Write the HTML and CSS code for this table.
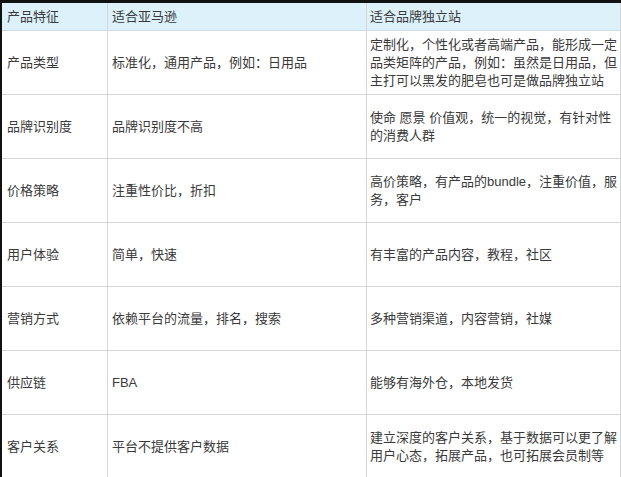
FILE: index.html
```html
<!DOCTYPE html>
<html lang="zh">
<head>
<meta charset="utf-8">
<link rel="stylesheet" href="styles.css">
</head>
<body>
<div class="frame">
  <div class="grid">
    <div class="cell head c1">产品特征</div>
    <div class="cell head c2">适合亚马逊</div>
    <div class="cell head c3">适合品牌独立站</div>

    <div class="cell c1">产品类型</div>
    <div class="cell c2">标准化，通用产品，例如：日用品</div>
    <div class="cell c3">定制化，个性化或者高端产品，能形成一定<br>品类矩阵的产品，例如：虽然是日用品，但<br>主打可以黑发的肥皂也可是做品牌独立站</div>

    <div class="cell c1">品牌识别度</div>
    <div class="cell c2">品牌识别度不高</div>
    <div class="cell c3">使命 愿景 价值观，统一的视觉，有针对性<br>的消费人群</div>

    <div class="cell c1">价格策略</div>
    <div class="cell c2">注重性价比，折扣</div>
    <div class="cell c3">高价策略，有产品的bundle，注重价值，服<br>务，客户</div>

    <div class="cell c1">用户体验</div>
    <div class="cell c2">简单，快速</div>
    <div class="cell c3">有丰富的产品内容，教程，社区</div>

    <div class="cell c1">营销方式</div>
    <div class="cell c2">依赖平台的流量，排名，搜索</div>
    <div class="cell c3">多种营销渠道，内容营销，社媒</div>

    <div class="cell c1">供应链</div>
    <div class="cell c2">FBA</div>
    <div class="cell c3">能够有海外仓，本地发货</div>

    <div class="cell c1">客户关系</div>
    <div class="cell c2">平台不提供客户数据</div>
    <div class="cell c3">建立深度的客户关系，基于数据可以更了解<br>用户心态，拓展产品，也可拓展会员制等</div>
  </div>
</div>
</body>
</html>
```

FILE: styles.css
```css
html, body {
  margin: 0;
  padding: 0;
  background: #ffffff;
}

body {
  width: 621px;
  height: 477px;
  overflow: hidden;
  font-family: "Liberation Sans", "Noto Sans CJK SC", sans-serif;
  font-size: 13px;
  line-height: 18px;
  color: #3a3a3a;
}

.frame {
  border-top: 3px solid #111111;
  border-left: 2px solid #111111;
  box-sizing: border-box;
  height: 477px;
}

.grid {
  display: grid;
  grid-template-columns: 106px 259px 254px;
  grid-auto-rows: 64px;
  grid-template-rows: 28px;
}

.cell {
  display: flex;
  align-items: center;
  box-sizing: border-box;
  border-right: 1px solid #d6d6d6;
  border-bottom: 1px solid #d6d6d6;
  padding: 0 4px;
  white-space: nowrap;
  overflow: hidden;
}

.cell.c1 {
  padding-left: 5px;
}

.cell.c3 {
  padding-left: 3px;
  padding-right: 0;
}

.cell.head {
  background: #dcf1fa;
  border-bottom-color: #c9dde6;
}
```
